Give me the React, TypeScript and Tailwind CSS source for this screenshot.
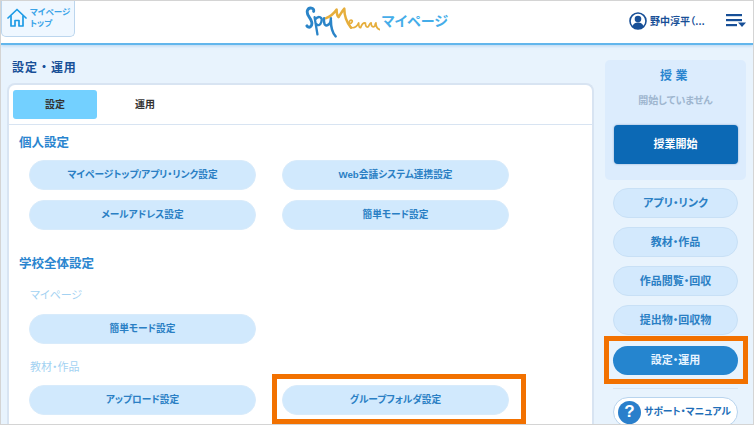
const FONT = "font-['Liberation_Sans','Noto_Sans_CJK_JP',sans-serif] [font-feature-settings:'palt']";

function HomeIcon() {
  return (
    <svg width="20" height="20" viewBox="0 0 20 20" fill="none" stroke="#1d9be6" strokeWidth="1.7" strokeLinejoin="round" strokeLinecap="round">
      <path d="M1 10 L10 1.5 L19 10" />
      <path d="M4 8 V18 H8 V12.5 H12 V18 H16 V8" />
    </svg>
  );
}

function Logo() {
  return (
    <svg width="78" height="36" viewBox="0 0 78 36" fill="none" strokeLinecap="round" strokeLinejoin="round">
      <g stroke="#2a84c8">
        <path d="M9 7 C10 3 4 2 2.5 6 C1 11 6 13 7 18 C8 23 4 25 2 22" strokeWidth="3" />
        <path d="M10 13 L13 31 M11 15 C14 11 19 13 17 18 C16 22 13 22 12 20" strokeWidth="2.4" />
        <path d="M20 14 C19 20 21 23 24 21 C26 20 27 17 27 14 M27 16 C27 23 28 29 32 33" strokeWidth="2.6" />
      </g>
      <g stroke="#e6ae3c">
        <path d="M22 14 C27 12 31 8 33 5 C33 9 34 12 35 13 C37 10 39 6 41 4 C41 10 43 18 48 24" strokeWidth="2.6" />
        <path d="M46 20 C50 19 50 16 48 16 C45 16 45 24 50 24 C53 24 55 21 56 19 C56 22 56 24 58 24 C59 21 61 18 63 19 C63 22 64 24 66 23 C67 21 68 19 69 19 C69 23 71 24 73 22 C73 20 74 19 74 19 C74 23 75 25 78 26" strokeWidth="1.8" />
      </g>
    </svg>
  );
}

function UserIcon() {
  return (
    <svg width="18" height="18" viewBox="0 0 18 18">
      <circle cx="9" cy="9" r="8" fill="#fff" stroke="#174f97" strokeWidth="1.6" />
      <circle cx="9" cy="7" r="3.3" fill="#174f97" />
      <path d="M3.5 15 C4 11.5 6.5 10.5 9 10.5 C11.5 10.5 14 11.5 14.5 15 C13 16.5 11 17 9 17 C7 17 5 16.5 3.5 15 Z" fill="#174f97" />
    </svg>
  );
}

function MenuIcon() {
  return (
    <svg width="20" height="14" viewBox="0 0 20 14" fill="#174f97">
      <rect x="0" y="0" width="16" height="2.2" />
      <rect x="0" y="5" width="16" height="2.2" />
      <rect x="0" y="10" width="11" height="2.2" />
      <path d="M12 8.5 H20 L16 13 Z" />
    </svg>
  );
}

function SettingButton({ label }: { label: string }) {
  return (
    <div className="flex h-[30px] w-[227px] items-center justify-center rounded-full border border-[#d8ebfb] bg-[#d1e9fd] text-[9.7px] font-bold text-[#2a7fc4]">
      {label}
    </div>
  );
}

function SideButton({ label, active }: { label: string; active?: boolean }) {
  return (
    <div
      className={
        active
          ? 'flex h-[29px] w-[125px] shrink-0 items-center justify-center rounded-full bg-[#2585cf] text-[11px] font-bold text-[#e8f4ff]'
          : 'flex h-[30px] w-[125px] shrink-0 items-center justify-center rounded-full border border-[#c8e0f6] bg-[#d3e9fd] text-[11px] font-bold text-[#2a7fc4]'
      }
    >
      {label}
    </div>
  );
}

export default function App() {
  return (
    <div className={`${FONT} relative flex h-[425px] w-[754px] flex-col overflow-hidden border border-[#d4d4d4] bg-[#e8f3fd]`}>
      {/* header */}
      <header className="flex h-[44px] shrink-0 items-center border-b-2 border-[#62b6ec] bg-white shadow-[0_1px_3px_rgba(90,160,220,0.35)]">
        <div className="mb-[7px] flex h-[36px] w-[74px] shrink-0 items-center gap-[3px] rounded-b-[5px] border border-t-0 border-[#bcd6ee] bg-[#eff7ff] pl-[5px]">
          <HomeIcon />
          <span className="text-[8.5px] leading-[11px] font-bold whitespace-nowrap text-[#3aa4e8]">
            マイページ
            <br />
            トップ
          </span>
        </div>
        <div className="ml-[230px] flex w-[143px] shrink-0 items-center gap-[2px]">
          <Logo />
          <span className="mb-[2px] text-[14px] font-bold whitespace-nowrap text-[#45ade9]">マイページ</span>
        </div>
        <div className="ml-[181px] flex shrink-0 items-center gap-[3px] pb-[2px]">
          <UserIcon />
          <span className="w-[61px] text-[10px] font-bold whitespace-nowrap text-[#174f97]">野中淳平（…</span>
        </div>
        <div className="ml-[15px] shrink-0 pb-[3px]">
          <MenuIcon />
        </div>
      </header>

      <div className="flex min-h-0 flex-1 pr-[7px] pl-[6px]">
        {/* main */}
        <main className="flex w-[587px] shrink-0 flex-col">
          <h1 className="mt-[15px] mb-[7px] ml-[5px] h-[16px] text-[12px] leading-[16px] font-bold tracking-[0.08em] text-[#174f97] [font-feature-settings:normal]">設定・運用</h1>
          <div className="flex-1 rounded-t-[8px] border-2 border-b-0 border-[#d8e4f2] bg-white">
            <div className="flex h-[40px] items-start border-b border-[#d8e4f2] pt-[5px] pl-[4px]">
              <div className="flex h-[29px] w-[84px] items-center justify-center rounded-[3px] bg-[#73d0ff] text-[10px] font-bold text-[#333]">設定</div>
              <div className="flex h-[29px] w-[96px] items-center justify-center text-[10px] font-bold text-[#333]">運用</div>
            </div>
            <div className="pl-[20px]">
              <h2 className="mt-[10px] -ml-[10px] h-[16px] text-[12.5px] leading-[16px] font-bold text-[#2a85cf]">個人設定</h2>
              <div className="mt-[9px] grid w-[480px] grid-cols-[227px_227px] gap-x-[26px] gap-y-[10px]">
                <SettingButton label="マイページトップ/アプリ・リンク設定" />
                <SettingButton label="Web会議システム連携設定" />
                <SettingButton label="メールアドレス設定" />
                <SettingButton label="簡単モード設定" />
              </div>
              <h2 className="mt-[26px] -ml-[10px] h-[16px] text-[12.5px] leading-[16px] font-bold text-[#2a85cf]">学校全体設定</h2>
              <h3 className="mt-[15px] ml-[1px] h-[16px] text-[11px] leading-[16px] text-[#a3d2f2]">マイページ</h3>
              <div className="mt-[11px]">
                <SettingButton label="簡単モード設定" />
              </div>
              <h3 className="mt-[15px] ml-[1px] h-[16px] text-[11px] leading-[16px] text-[#a3d2f2]">教材・作品</h3>
              <div className="mt-[10px] grid w-[480px] grid-cols-[227px_227px] gap-x-[26px]">
                <SettingButton label="アップロード設定" />
                <SettingButton label="グループフォルダ設定" />
              </div>
            </div>
          </div>
        </main>

        {/* sidebar */}
        <aside className="ml-[11px] flex w-[141px] shrink-0 flex-col items-center">
          <div className="mt-[15px] flex h-[120px] w-[141px] shrink-0 flex-col items-center rounded-[5px] bg-[#dcecfd]">
            <div className="mt-[8px] text-[12px] leading-[16px] font-bold tracking-[0.3em] text-[#2a85cf]">授業</div>
            <div className="mt-[11px] text-[10px] leading-[12px] font-bold text-[#9fb6cf]">開始していません</div>
            <div className="mt-[18px] flex h-[39px] w-[124px] shrink-0 items-center justify-center rounded-[4px] bg-[#0c69b5] text-[11px] font-bold text-white shadow-[0_0_2px_rgba(40,90,150,0.5)]">授業開始</div>
          </div>
          <div className="mt-[8px] flex shrink-0 flex-col items-center gap-[9px]">
            <SideButton label="アプリ・リンク" />
            <SideButton label="教材・作品" />
            <SideButton label="作品閲覧・回収" />
            <SideButton label="提出物・回収物" />
          </div>
          <div className="mt-[11px] shrink-0">
            <SideButton label="設定・運用" active />
          </div>
          <div className="mt-[13px] h-px w-[125px] shrink-0 bg-[#d8e4f0]" />
          <div className="mt-[8px] flex h-[30px] w-[125px] shrink-0 items-center gap-[3px] rounded-full border border-[#b8d4ee] bg-white pl-[4px] text-[9.8px] font-bold whitespace-nowrap text-[#1f6fb8]">
            <span className="flex h-[23px] w-[23px] shrink-0 items-center justify-center rounded-full bg-[#2a7fcb] text-[17px] font-bold text-white">?</span>
            サポート・マニュアル
          </div>
        </aside>
      </div>

      {/* orange highlights */}
      <div className="absolute top-[373px] left-[271px] h-[50px] w-[254px] border-[5px] border-[#f27100]" />
      <div className="absolute top-[335px] left-[603px] h-[48px] w-[144px] border-[5px] border-[#f27100]" />
    </div>
  );
}
